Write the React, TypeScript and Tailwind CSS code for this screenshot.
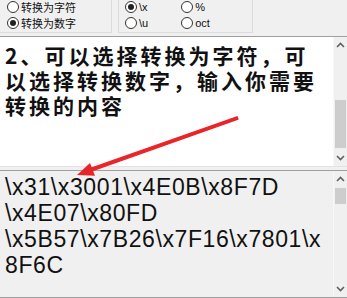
import React from "react";

function Radio({ checked, label, cjk }: { checked?: boolean; label: string; cjk?: boolean }) {
  return (
    <div className="flex items-center h-[16px]">
      <span className="flex items-center justify-center w-[12px] h-[12px] rounded-full border border-[#333333] bg-white">
        {checked && <span className="w-[6px] h-[6px] rounded-full bg-[#222222]" />}
      </span>
      <span
        className={`ml-[2px] text-[#111] leading-none ${
          cjk ? "text-[11px] font-['Noto_Sans_CJK_SC',sans-serif]" : "text-[11px] font-['Liberation_Sans',sans-serif]"
        }`}
      >
        {label}
      </span>
    </div>
  );
}

function ScrollBar({ thumbTop, thumbH }: { thumbTop: number; thumbH: number }) {
  return (
    <div className="relative w-[14px] h-full bg-[#f0f0f0] border-l border-[#f8f8f8] flex flex-col items-center justify-between py-[5px]">
      <svg width="9" height="6" viewBox="0 0 9 6">
        <path d="M1 5 L4.5 1.5 L8 5" fill="none" stroke="#606060" strokeWidth="1.6" />
      </svg>
      <div
        className="absolute left-[1px] right-[1px] bg-[#cdcdcd]"
        style={{ top: thumbTop, height: thumbH }}
      />
      <svg width="9" height="6" viewBox="0 0 9 6">
        <path d="M1 1 L4.5 4.5 L8 1" fill="none" stroke="#606060" strokeWidth="1.6" />
      </svg>
    </div>
  );
}

export default function App() {
  return (
    <div className="relative w-[347px] h-[298px] overflow-hidden bg-[#f0f0f0]">
      {/* option groups */}
      <div className="flex h-[36px]">
        <div className="w-[112px] h-[34px] border-r border-b border-[#dcdcdc] pl-[7px] -mt-px">
          <Radio label="转换为字符" cjk />
          <Radio label="转换为数字" cjk checked />
        </div>
        <div className="ml-[6px] w-[135px] h-[34px] border-l border-r border-b border-[#dcdcdc] pl-[6px] -mt-px flex gap-[33px]">
          <div>
            <Radio label="\x" checked />
            <Radio label="\u" />
          </div>
          <div>
            <Radio label="%" />
            <Radio label="oct" />
          </div>
        </div>
      </div>

      {/* input */}
      <div className="flex h-[130px] bg-white border-t border-[#a0a0a0]">
        <div className="flex-1 pt-[6px] pl-[5px] text-[21px] leading-[25px] tracking-[3px] font-bold text-[#111] font-['Noto_Sans_CJK_SC',sans-serif]">
          <div className="h-[25px]">2、可以选择转换为字符，可</div>
          <div className="h-[25px]">以选择转换数字，输入你需要</div>
          <div className="h-[25px]">转换的内容</div>
        </div>
        <ScrollBar thumbTop={63} thumbH={48} />
      </div>

      <div className="h-[4px] border-t border-[#e3e3e3]" />

      {/* output */}
      <div className="flex h-[128px] border-t border-b border-[#a0a0a0] bg-[#f0f0f0]">
        <div className="flex-1 pt-[3px] pl-[5px] text-[23px] leading-[26px] tracking-[0.6px] text-[#111] font-['Liberation_Sans',sans-serif]">
          <div>\x31\x3001\x4E0B\x8F7D</div>
          <div>\x4E07\x80FD</div>
          <div>\x5B57\x7B26\x7F16\x7801\x</div>
          <div>8F6C</div>
        </div>
        <ScrollBar thumbTop={17} thumbH={16} />
      </div>

      {/* annotation arrow */}
      <svg className="absolute inset-0 pointer-events-none" width="347" height="298" viewBox="0 0 347 298">
        <path d="M237 116.8 L238 119.2 L92 170.8 L91.2 168.2 Z" fill="#e8262a" stroke="#e8262a" strokeWidth="1.4" strokeLinejoin="round" />
        <polygon points="77,175 95,175.8 90,163" fill="#e8262a" />
      </svg>
    </div>
  );
}
